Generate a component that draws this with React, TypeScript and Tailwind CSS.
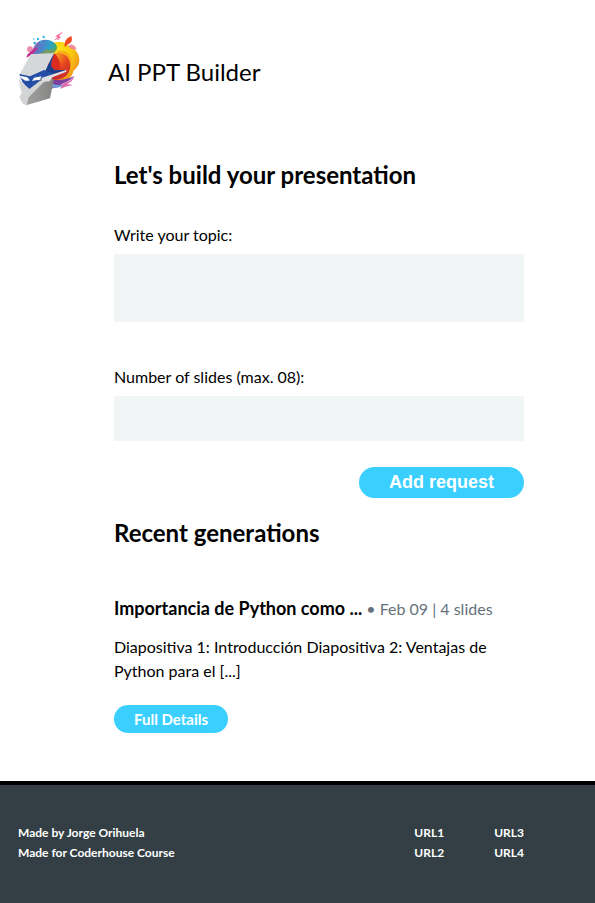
import React from "react";

function Logo() {
  return (
    <svg viewBox="24 18 186 225" className="h-[75px] w-[62px] shrink-0" role="img" aria-label="AI PPT Builder logo">
      <defs>
        <linearGradient id="swirl" x1="0" x2="1" y1=".4" y2=".6">
          <stop offset="0" stopColor="#a65aa8" />
          <stop offset=".3" stopColor="#5b78c4" />
          <stop offset=".65" stopColor="#2f9fd0" />
          <stop offset="1" stopColor="#3fae6b" />
        </linearGradient>
        <radialGradient id="sun" cx=".3" cy=".25" r=".85">
          <stop offset="0" stopColor="#fde31a" />
          <stop offset=".5" stopColor="#fbc90c" />
          <stop offset="1" stopColor="#ee8a1e" />
        </radialGradient>
        <radialGradient id="ember" cx=".45" cy=".1" r=".9">
          <stop offset="0" stopColor="#f7941d" />
          <stop offset=".45" stopColor="#e8481f" />
          <stop offset="1" stopColor="#c3272f" />
        </radialGradient>
        <linearGradient id="jaw" x1="0" x2="1">
          <stop offset="0" stopColor="#a3a3a2" />
          <stop offset="1" stopColor="#838382" />
        </linearGradient>
      </defs>
      <path d="M122 60C138 46 160 48 172 60c22 8 35 24 36 43 1 18-10 28-18 35-2 14-12 24-24 28h-40z" fill="url(#sun)" />
      <path d="M142 78c18-6 38 4 42 22 3 16-4 30-14 38l-28-8z" fill="#f5a315" opacity=".75" />
      <path d="M128 90c14-10 36-6 46 8 10 15 9 36-2 50-12 15-30 18-46 16l-14-34z" fill="url(#ember)" />
      <path d="M132 84l-22 36 12 12 26 4c6-18-1-40-16-52z" fill="#dc2c22" />
      <path d="M66 88C68 60 84 44 106 44c18 0 34 10 35 24-2 12-12 18-26 20z" fill="url(#swirl)" />
      <path d="M80 88c12-2 22-8 28-16 8 4 20 4 30-2-4 12-16 18-30 20z" fill="#8a9b45" opacity=".75" />
      <circle cx="60" cy="73" r="9" fill="#f08bb0" />
      <path d="M50 98c0-10 8-14 14-20 6-5 12-10 20-10-4 8-10 10-16 18z" fill="#c22a90" />
      <path d="M126 164c22 3 46-1 68-11-14 12-22 18-34 22-10 8-22 14-36 16z" fill="#7d3f9d" />
      <path d="M128 176c14 6 26 4 38 0-10 10-26 14-42 12z" fill="#6f9bd8" />
      <path d="M158 176c14-3 24-9 36-22-6 14-14 20-24 24 8 0 12 1 18 3-14 2-24 5-38 11 3-6 5-10 8-16z" fill="#e069b0" />
      <path d="M164 58c0-12 8-20 20-25 4 12 1 20-7 23-6 3-8 5-11 10-3-2-3-5-2-8z" fill="#ef4a23" />
      <path d="M174 64c6-8 22-8 26 10-8-3-14 1-19-4-2-2-4-4-7-6z" fill="#f28a9c" />
      <path d="M157 22l-20 12 9 0-12 11 13-8-4 8 9-10-9 0z" fill="#ef5c93" stroke="#ef5c93" strokeWidth="1.5" />
      <g fill="#2fadde">
        <circle cx="84" cy="42" r="3.5" />
        <circle cx="101" cy="36" r="3.5" />
        <circle cx="92" cy="51" r="3" />
        <circle cx="74" cy="54" r="4" />
        <circle cx="71" cy="42" r="2" />
      </g>
      <path d="M62 88l71-4-31 58-40 16-34-8z" fill="#d6d7d9" />
      <path d="M132 85l-27 54-10 18 74-22-34 0-13-8 3-16z" fill="#214a9c" />
      <path d="M118 114l14 22 36 0-50 14-12-10z" fill="#1b3f8a" />
      <path d="M28 147l32 7 42-19 34 12-32 11-38 32-20-4-14-26z" fill="#244fa6" />
      <path d="M28 160l22 30-3 50-8-3-12-20 8-12-6-20z" fill="#dcddde" />
      <path d="M58 188l34-28 40 2-12 58-72 21-4-20z" fill="url(#jaw)" />
      <path d="M28 162l30 30 32-24 14 1-48 48-6 24-12-6-8-18 6-14z" fill="#d3d4d5" />
      <path d="M96 158l73-23 0 5-42 17-8 12-24 2z" fill="#dfe0e2" />
      <path d="M29 152l23 5 8 10-14 0-13-8z" fill="#fff" />
      <path d="M66 168l6-10 23-4-6 10z" fill="#fff" />
      <path d="M60 166l8 2 24-3-34 27-22-23 16 1z" fill="#244fa6" />
    </svg>
  );
}

export default function App() {
  return (
    <div className="flex min-h-screen flex-col bg-white font-['Lato','Liberation_Sans',sans-serif] text-base text-black">
      <header className="flex items-center gap-7 px-[18px] pt-[31px]">
        <Logo />
        <h1 className="pt-1.5 text-2xl">AI PPT Builder</h1>
      </header>

      <main className="flex-1 pr-[71px] pb-12 pl-[114px]">
        <section className="pt-[53px]">
          <h2 className="text-2xl font-bold">Let's build your presentation</h2>
          <form onSubmit={(e) => e.preventDefault()} className="flex flex-col pt-8">
            <label htmlFor="topic">Write your topic:</label>
            <textarea id="topic" className="mt-[7px] h-[68px] w-full resize-none appearance-none rounded-none bg-[#f1f5f6] p-2" />
            <label htmlFor="slides" className="mt-[43px]">Number of slides (max. 08):</label>
            <input id="slides" type="text" inputMode="numeric" className="mt-[7px] h-[45px] w-full appearance-none rounded-none bg-[#f1f5f6] px-2" />
            <button
              type="submit"
              className="mt-[26px] h-[31px] self-end rounded-full bg-[#3bcfff] px-[30px] pb-0.5 font-['Liberation_Sans',Arial,sans-serif] text-lg leading-7 font-bold text-white"
            >
              Add request
            </button>
          </form>
        </section>

        <section className="pt-[19px]">
          <h2 className="text-2xl font-bold">Recent generations</h2>
          <article className="pt-[45px]">
            <div className="flex items-baseline gap-1">
              <h3 className="text-lg font-bold">Importancia de Python como ...</h3>
              <p className="text-[#65727b]">• Feb 09 | 4 slides</p>
            </div>
            <p className="pt-[13px]">Diapositiva 1: Introducción Diapositiva 2: Ventajas de Python para el [...]</p>
            <a href="#details" className="mt-[22px] block w-fit rounded-full bg-[#3bcfff] px-5 py-0.5 text-[15px] leading-6 font-bold text-white">
              Full Details
            </a>
          </article>
        </section>
      </main>

      <footer className="flex justify-between border-t-4 border-black bg-[#333f44] pt-[38px] pr-[71px] pb-10 pl-[18px] text-xs leading-5 font-bold text-white">
        <div>
          <p>Made by Jorge Orihuela</p>
          <p>Made for Coderhouse Course</p>
        </div>
        <nav className="grid grid-flow-col grid-rows-2 gap-x-[50px]">
          <a href="#url1">URL1</a>
          <a href="#url2">URL2</a>
          <a href="#url3">URL3</a>
          <a href="#url4">URL4</a>
        </nav>
      </footer>
    </div>
  );
}
